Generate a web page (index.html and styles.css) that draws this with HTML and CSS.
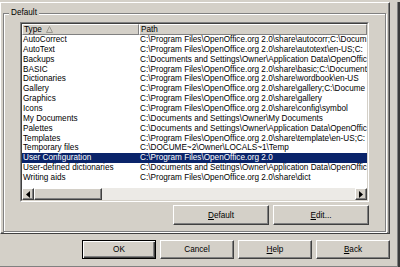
FILE: index.html
```html
<!DOCTYPE html>
<html>
<head>
    <link rel="stylesheet" href="styles.css">
</head>
<body>
    <div class="window">
        <div class="content">
            <div class="page">
                <fieldset class="group">
                    <legend>Default</legend>
                    <div class="group-body">
                        <!-- Path list -->
                        <div class="list">
                            <div class="list-head">
                                <div class="head-cell col-type">
                                    Type
                                    <svg class="sort" width="7" height="7" viewBox="0 0 7 7">
                                        <polygon points="0.5,6.5 3.5,0.5 6.5,6.5" fill="none" stroke="#9a9890" stroke-width="1"/>
                                    </svg>
                                </div>
                                <div class="head-cell col-path">Path</div>
                            </div>
                            <div class="list-body">
                                <div class="row"><span class="col-type">AutoCorrect</span><span class="col-path">C:\Program Files\OpenOffice.org 2.0\share\autocorr;C:\Docum</span></div>
                                <div class="row"><span class="col-type">AutoText</span><span class="col-path">C:\Program Files\OpenOffice.org 2.0\share\autotext\en-US;C:</span></div>
                                <div class="row"><span class="col-type">Backups</span><span class="col-path">C:\Documents and Settings\Owner\Application Data\OpenOffic</span></div>
                                <div class="row"><span class="col-type">BASIC</span><span class="col-path">C:\Program Files\OpenOffice.org 2.0\share\basic;C:\Document</span></div>
                                <div class="row"><span class="col-type">Dictionaries</span><span class="col-path">C:\Program Files\OpenOffice.org 2.0\share\wordbook\en-US</span></div>
                                <div class="row"><span class="col-type">Gallery</span><span class="col-path">C:\Program Files\OpenOffice.org 2.0\share\gallery;C:\Docume</span></div>
                                <div class="row"><span class="col-type">Graphics</span><span class="col-path">C:\Program Files\OpenOffice.org 2.0\share\gallery</span></div>
                                <div class="row"><span class="col-type">Icons</span><span class="col-path">C:\Program Files\OpenOffice.org 2.0\share\config\symbol</span></div>
                                <div class="row"><span class="col-type">My Documents</span><span class="col-path">C:\Documents and Settings\Owner\My Documents</span></div>
                                <div class="row"><span class="col-type">Palettes</span><span class="col-path">C:\Documents and Settings\Owner\Application Data\OpenOffic</span></div>
                                <div class="row"><span class="col-type">Templates</span><span class="col-path">C:\Program Files\OpenOffice.org 2.0\share\template\en-US;C:</span></div>
                                <div class="row"><span class="col-type">Temporary files</span><span class="col-path">C:\DOCUME~2\Owner\LOCALS~1\Temp</span></div>
                                <div class="row selected"><span class="col-type">User Configuration</span><span class="col-path">C:\Program Files\OpenOffice.org 2.0</span></div>
                                <div class="row"><span class="col-type">User-defined dictionaries</span><span class="col-path">C:\Documents and Settings\Owner\Application Data\OpenOffic</span></div>
                                <div class="row"><span class="col-type">Writing aids</span><span class="col-path">C:\Program Files\OpenOffice.org 2.0\share\dict</span></div>
                            </div>
                            <div class="hscroll">
                                <div class="sb-btn">
                                    <svg width="4" height="7" viewBox="0 0 4 7"><polygon points="4,0 0,3.5 4,7" fill="#000"/></svg>
                                </div>
                                <div class="sb-thumb"></div>
                                <div class="sb-track"></div>
                                <div class="sb-btn">
                                    <svg width="4" height="7" viewBox="0 0 4 7"><polygon points="0,0 4,3.5 0,7" fill="#000"/></svg>
                                </div>
                            </div>
                        </div>

                        <div class="group-buttons">
                            <button class="btn wide"><u>D</u>efault</button>
                            <button class="btn wide"><u>E</u>dit...</button>
                        </div>
                    </div>
                </fieldset>
            </div>

            <!-- Dialog buttons -->
            <div class="dialog-buttons">
                <button class="btn primary">OK</button>
                <button class="btn">Cancel</button>
                <button class="btn"><u>H</u>elp</button>
                <button class="btn"><u>B</u>ack</button>
            </div>
        </div>
    </div>
</body>
</html>
```

FILE: styles.css
```css
body {
    margin: 0;
    padding: 0;
    font-family: 'Liberation Sans', Tahoma, sans-serif;
    font-size: 8.2px;
    color: #000;
    background-color: #d4d0c8;
    overflow: hidden;
}

.window {
    width: 400px;
    height: 267px;
    box-sizing: border-box;
    border-right: 2px solid #3a3a3a;
    border-bottom: 2px solid #3a3a3a;
    box-shadow: inset -1px -1px #808080;
}

.content {
    width: 390px;
}

.page {
    margin-top: 2px;
    height: 232px;
    box-sizing: border-box;
    border-top: 1px solid #fff;
    border-left: 1px solid #fff;
    border-right: 1px solid #404040;
    border-bottom: 1px solid #404040;
    box-shadow: inset -1px -1px #808080;
}

.group {
    margin: 5px 0 0 2px;
    padding: 4px 0 0 0;
    width: 383px;
    height: 224px;
    min-width: 0;
    box-sizing: border-box;
    border: 1px solid #808080;
    box-shadow: inset 1px 1px #fff, 1px 1px #fff;
}

.group legend {
    margin-left: 5px;
    padding: 0 2px;
    line-height: 10px;
    background-color: #d4d0c8;
}

.group-body {
    padding-left: 16px;
    width: 349px;
}

.list {
    width: 349px;
    height: 180px;
    box-sizing: border-box;
    border-top: 1px solid #808080;
    border-left: 1px solid #808080;
    border-right: 1px solid #fff;
    border-bottom: 1px solid #fff;
    background-color: #fff;
    display: flex;
    flex-direction: column;
    position: relative;
}

.list::before {
    content: '';
    position: absolute;
    inset: 0;
    border-top: 1px solid #404040;
    border-left: 1px solid #404040;
    border-right: 1px solid #d4d0c8;
    border-bottom: 1px solid #d4d0c8;
    pointer-events: none;
    z-index: 2;
}

.list-head {
    display: flex;
    margin: 1px 1px 0 1px;
    height: 11px;
    background-color: #d4d0c8;
}

.head-cell {
    box-sizing: border-box;
    height: 11px;
    line-height: 9px;
    border-top: 1px solid #fff;
    border-left: 1px solid #fff;
    border-right: 1px solid #808080;
    border-bottom: 1px solid #808080;
    display: flex;
    align-items: center;
    white-space: nowrap;
}

.head-cell.col-type {
    width: 117px;
    padding-left: 1px;
}

.head-cell.col-path {
    flex: 1;
    padding-left: 1px;
}

.sort {
    margin-left: 4px;
}

.list-body {
    flex: 1;
    margin: 0 1px;
    overflow: hidden;
}

.row {
    display: flex;
    height: 9.86px;
    line-height: 9.86px;
    white-space: nowrap;
    overflow: hidden;
}

.row .col-type {
    width: 117px;
    flex-shrink: 0;
    padding-left: 1px;
    box-sizing: border-box;
}

.row .col-path {
    padding-left: 1px;
}

.row.selected {
    background-color: #0a246a;
    color: #fff;
}

.hscroll {
    display: flex;
    height: 12px;
    margin: 0 1px 1px 1px;
    background-color: #eceae6;
}

.sb-btn,
.sb-thumb {
    box-sizing: border-box;
    height: 12px;
    background-color: #d4d0c8;
    border-top: 1px solid #fff;
    border-left: 1px solid #fff;
    border-right: 1px solid #404040;
    border-bottom: 1px solid #404040;
    box-shadow: inset -1px -1px #808080;
}

.sb-btn {
    width: 12px;
    display: flex;
    align-items: center;
    justify-content: center;
}

.sb-thumb {
    width: 68px;
}

.sb-track {
    flex: 1;
}

.group-buttons {
    display: flex;
    justify-content: flex-end;
    gap: 4px;
    margin-top: 3px;
}

.btn {
    font-family: inherit;
    font-size: 8.2px;
    color: #000;
    width: 74px;
    height: 19px;
    padding: 0;
    box-sizing: border-box;
    background-color: #d4d0c8;
    border-top: 1px solid #fff;
    border-left: 1px solid #fff;
    border-right: 1px solid #404040;
    border-bottom: 1px solid #404040;
    box-shadow: inset -1px -1px #808080;
    border-radius: 0;
}

.btn.wide {
    width: 96px;
    height: 20px;
}

.btn.primary {
    border: 1px solid #000;
    box-shadow: inset 1px 1px #fff, inset -1px -1px #404040, inset -2px -2px #808080;
}

.btn u {
    text-decoration: underline;
}

.dialog-buttons {
    display: flex;
    justify-content: flex-end;
    gap: 4px;
    margin-top: 6px;
}
```
